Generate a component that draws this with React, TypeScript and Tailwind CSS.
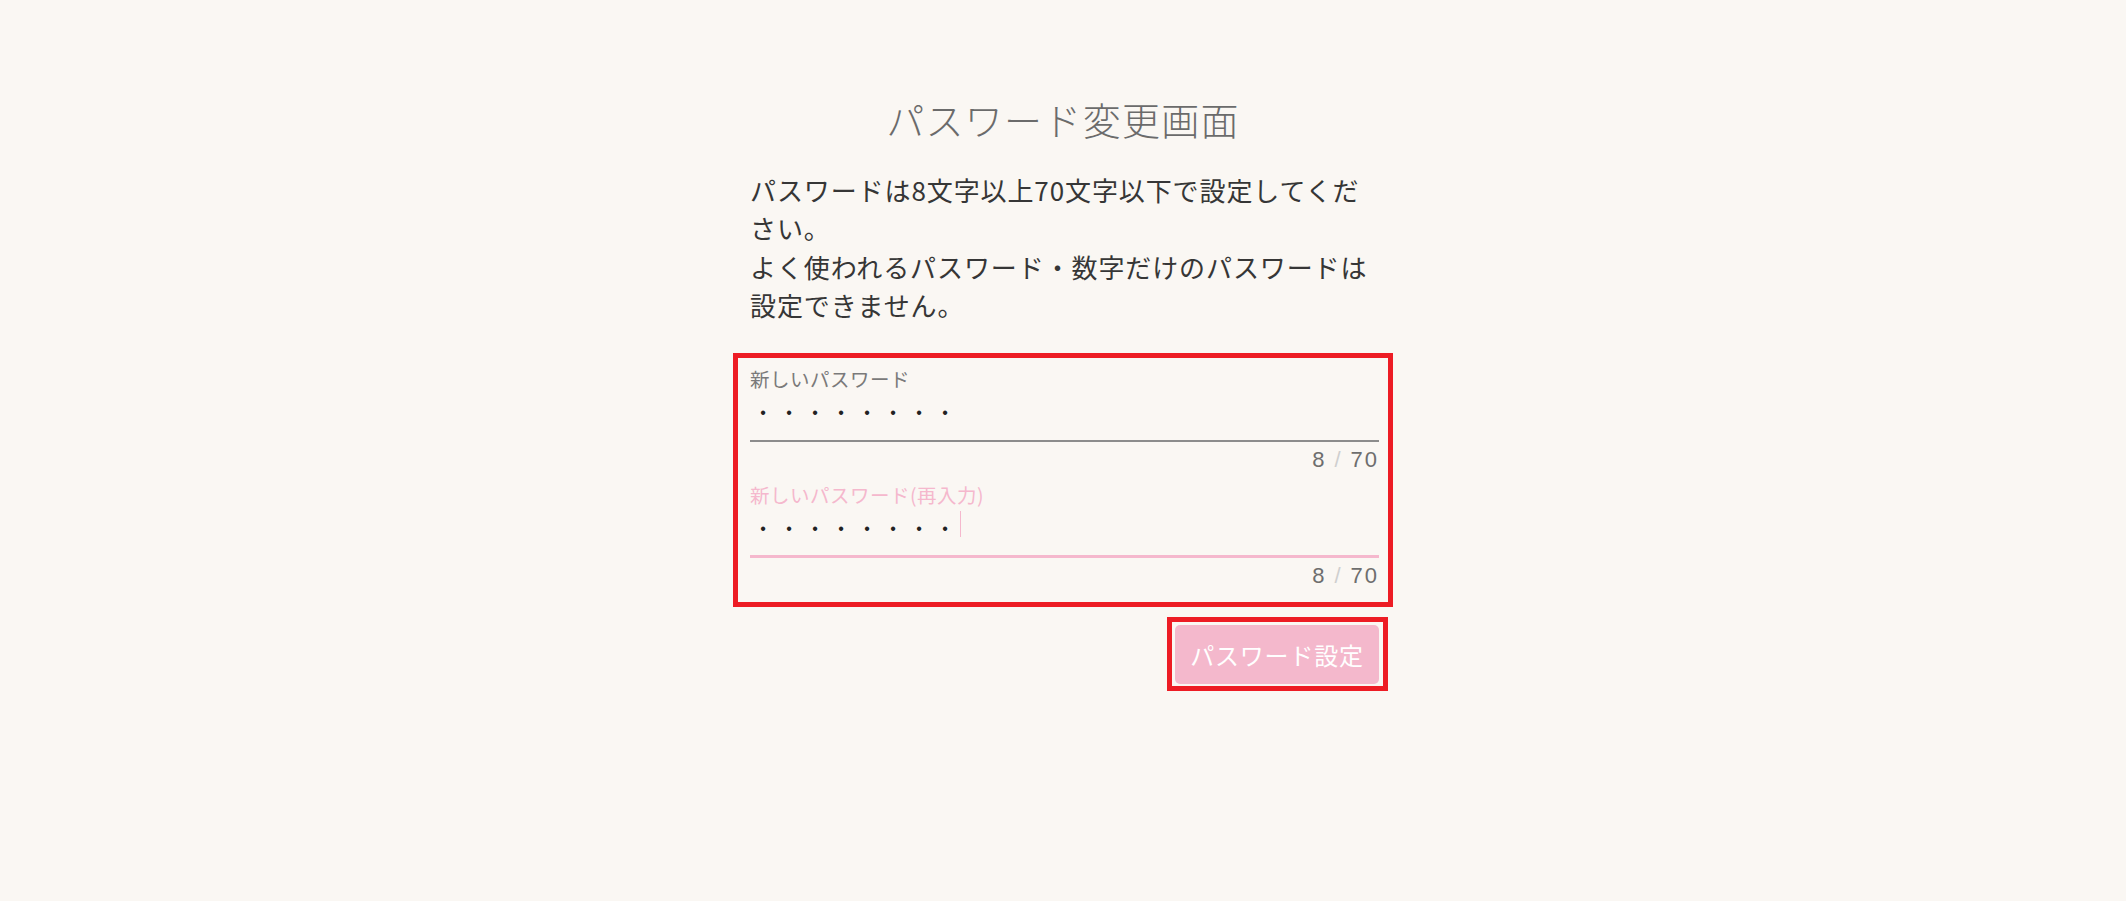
import React from "react";

const dots = Array.from({ length: 8 });

function Counter() {
  return (
    <div className="mt-[6px] flex justify-end leading-[24px] text-[22px] tracking-[2px] text-[#6e6e6e] font-['Liberation_Sans','Noto_Sans_CJK_JP',sans-serif]">
      <span>8</span>
      <span className="mx-[8px] text-[#cfcfcf]">/</span>
      <span>70</span>
    </div>
  );
}

function PasswordField({
  label,
  focused,
}: {
  label: string;
  focused?: boolean;
}) {
  return (
    <div>
      <div
        className={`leading-[24px] text-[19.5px] tracking-[0.5px] ${
          focused ? "text-[#f5b8cd]" : "text-[#7a7a7a]"
        }`}
      >
        {label}
      </div>
      <div
        className={`h-[51px] flex items-start pt-[12px] ${
          focused
            ? "border-b-[3px] border-[#f5b8cd]"
            : "border-b-2 border-[#8c8c8c]"
        }`}
      >
        {dots.map((_, i) => (
          <span
            key={i}
            className="w-[26px] text-center leading-[20px] text-[16px] text-[#222] font-['Liberation_Sans',sans-serif]"
          >
            •
          </span>
        ))}
        {focused && <span className="ml-[2px] mt-[-8px] w-px h-[26px] bg-[#f5b8cd]" />}
      </div>
      <Counter />
    </div>
  );
}

export default function App() {
  return (
    <div className="min-h-screen bg-[#faf7f3] flex justify-center font-['Noto_Sans_CJK_JP',sans-serif]">
      <div className="w-[660px] pt-[99px] flex flex-col">
        <h1 className="text-center text-[38px] leading-[40px] tracking-[1.3px] font-light text-[#6b6b6b]">
          パスワード変更画面
        </h1>
        <p className="mt-[32px] px-[17px] text-[26px] leading-[38.3px] tracking-[0.9px] text-[#363636] whitespace-nowrap">
          パスワードは8文字以上70文字以下で設定してくだ
          <br />
          さい。
          <br />
          よく使われるパスワード・数字だけのパスワードは
          <br />
          設定できません。
        </p>
        <div className="mt-[29px] border-[5px] border-[#ed1c24] pl-[12px] pr-[9px] pt-[9px] pb-[14px] flex flex-col gap-[11px]">
          <PasswordField label="新しいパスワード" />
          <PasswordField label="新しいパスワード(再入力)" focused />
        </div>
        <div className="mt-[10px] pr-[5px] flex justify-end">
          <div className="border-[5px] border-[#ed1c24] pt-[3px] pb-[2px] pl-[3px] pr-[4px]">
            <button className="w-[204px] h-[59px] rounded-[5px] bg-[#f4b8cc] text-white text-[24px] tracking-[0.8px]">
              パスワード設定
            </button>
          </div>
        </div>
      </div>
    </div>
  );
}
